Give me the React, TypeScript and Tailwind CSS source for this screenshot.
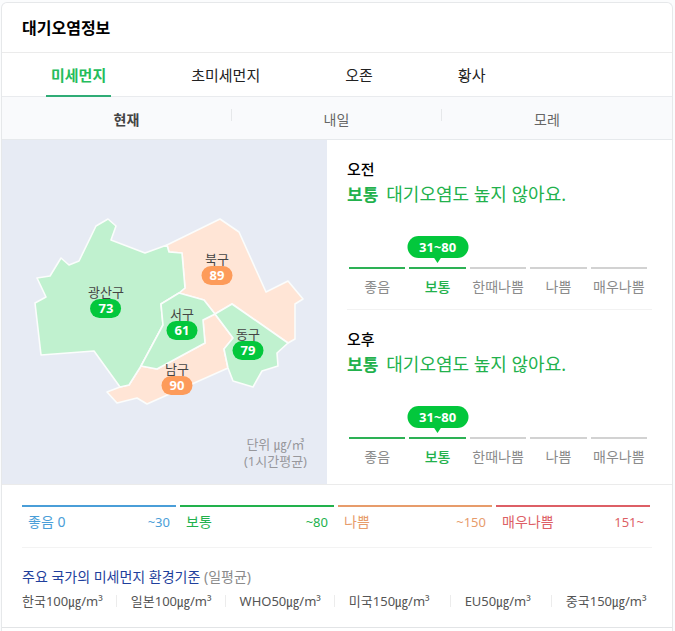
import { useState } from 'react';

const TABS = ['미세먼지', '초미세먼지', '오존', '황사'];
const DAYS = ['현재', '내일', '모레'];

const REGIONS = [
  {
    name: '북구',
    fill: '#ffe5d6',
    points:
      '167,245 220,219 239,232 266,292 288,281 303,299 295,304 295,339 288,343 232,304 215,314 204,300 179,293 185,288 182,253 169,252',
  },
  {
    name: '남구',
    fill: '#ffe5d6',
    points:
      '141,366 157,369 205,343 203,320 215,314 233,338 224,349 228,368 147,404 137,398 117,403 107,392 120,387 129,385',
  },
  {
    name: '광산구',
    fill: '#c0f1cf',
    points:
      '108,219 116,226 111,240 145,253 167,245 169,252 182,253 185,288 179,293 161,304 163,325 141,366 129,385 120,387 94,351 41,355 35,303 46,297 37,278 50,276 61,258 69,265 79,261 96,226',
  },
  {
    name: '서구',
    fill: '#c0f1cf',
    points: '179,293 204,300 215,314 203,320 205,343 157,369 141,366 163,325 161,304',
  },
  {
    name: '동구',
    fill: '#c0f1cf',
    points:
      '215,314 232,304 288,343 277,353 278,366 262,371 253,387 233,381 228,368 224,349 233,338',
  },
];

const PINS = [
  { name: '광산구', value: 73, x: 104, y: 178, color: 'bg-[#03c73c]' },
  { name: '북구', value: 89, x: 215, y: 145, color: 'bg-[#fd9b5a]' },
  { name: '서구', value: 61, x: 180, y: 200, color: 'bg-[#03c73c]' },
  { name: '동구', value: 79, x: 246, y: 220, color: 'bg-[#03c73c]' },
  { name: '남구', value: 90, x: 175, y: 255, color: 'bg-[#fd9b5a]' },
];

const LEVELS = ['좋음', '보통', '한때나쁨', '나쁨', '매우나쁨'];

const LEGEND = [
  { name: '좋음 0', limit: '~30', style: 'border-[#4a9ed8] text-[#4a9ed8]' },
  { name: '보통', limit: '~80', style: 'border-[#22b14c] text-[#22b14c]' },
  { name: '나쁨', limit: '~150', style: 'border-[#e79c6b] text-[#e79c6b]' },
  { name: '매우나쁨', limit: '151~', style: 'border-[#dd5f66] text-[#dd5f66]' },
];

const STANDARDS = ['한국100㎍/m³', '일본100㎍/m³', 'WHO50㎍/m³', '미국150㎍/m³', 'EU50㎍/m³', '중국150㎍/m³'];

function DistrictMap() {
  return (
    <div className="relative mx-auto h-[344px] w-[325px]">
      <svg viewBox="2 140 325 344" className="block h-full w-full" aria-hidden="true">
        {REGIONS.map((r) => (
          <polygon
            key={r.name}
            points={r.points}
            fill={r.fill}
            stroke="#fbfdfc"
            strokeWidth="1.6"
            strokeLinejoin="round"
          />
        ))}
      </svg>
      {PINS.map((p) => (
        <div
          key={p.name}
          className="absolute flex -translate-x-1/2 -translate-y-full flex-col items-center"
          style={{ left: p.x, top: p.y }}
        >
          <span className="h-[13px] text-[13px] leading-[13px] whitespace-nowrap text-[#444]">{p.name}</span>
          <span
            className={`h-[19px] w-[31px] rounded-full text-center text-[13px] leading-[19px] font-bold text-white ${p.color}`}
          >
            {p.value}
          </span>
        </div>
      ))}
      <p className="absolute right-5 bottom-[14px] text-center text-[13px] leading-[17px] text-[#98989c]">
        단위 ㎍/㎥
        <br />
        (1시간평균)
      </p>
    </div>
  );
}

function Forecast({ title }: { title: string }) {
  return (
    <section className="pt-[19px]">
      <h3 className="text-[15px] leading-5 font-medium text-black">{title}</h3>
      <p className="mt-[3px] text-lg leading-6 text-[#22b14c]">
        <strong className="mr-2 text-[17px] font-bold">보통</strong>
        대기오염도 높지 않아요.
      </p>
      <ol className="mr-[5px] ml-[2px] mt-[60px] flex gap-1">
        {LEVELS.map((level, i) => (
          <li
            key={level}
            className={`relative flex flex-1 basis-0 justify-center border-t-2 pt-2 text-sm leading-5 whitespace-nowrap ${
              i < 2 ? 'border-[#2db155]' : 'border-[#d2d2d2]'
            } ${i === 1 ? 'font-medium text-[#22b14c]' : 'text-[#8b8b8b]'}`}
          >
            {level}
            {i === 1 && (
              <span className="absolute bottom-full left-1/2 mb-[11px] h-[22px] w-[61px] -translate-x-1/2 rounded-full bg-[#03c73c] text-center text-[13px] leading-[22px] font-bold text-white">
                31~80
                <span className="absolute top-full left-1/2 -mt-px -translate-x-1/2 border-x-4 border-t-[6px] border-x-transparent border-t-[#03c73c]" />
              </span>
            )}
          </li>
        ))}
      </ol>
    </section>
  );
}

export default function App() {
  const [tab, setTab] = useState(0);
  const [day, setDay] = useState(0);

  return (
    <div className="min-h-screen bg-[#fbfcfd] px-px pt-[2px] pr-[2px] font-['Noto_Sans','Noto_Sans_CJK_KR',sans-serif]">
      <main className="min-h-[629px] rounded-t-md border border-b-0 border-[#e6e8ea] bg-white">
        <h2 className="border-b border-[#ebebeb] px-5 pt-[14px] pb-3 text-base leading-[23px] font-bold text-black">
          대기오염정보
        </h2>

        <nav className="flex gap-[75px] border-b border-[#e9ebee] px-11" aria-label="오염 물질">
          {TABS.map((name, i) => (
            <button
              key={name}
              type="button"
              onClick={() => setTab(i)}
              className={`-mb-px border-b-2 px-[5px] pt-[11px] pb-[9px] text-[15px] leading-[22px] whitespace-nowrap ${
                i === tab ? 'border-[#2fac76] font-bold text-[#25bd5c]' : 'border-transparent text-[#222]'
              }`}
            >
              {name}
            </button>
          ))}
        </nav>

        <nav className="flex border-b border-[#e6e9ec] bg-[#f9fafc] px-5" aria-label="날짜">
          {DAYS.map((name, i) => (
            <div key={name} className="flex flex-1 basis-0 items-start">
              <button
                type="button"
                onClick={() => setDay(i)}
                className={`flex-1 pt-[13px] pb-[9px] text-sm leading-5 ${
                  i === day ? 'font-bold text-[#444]' : 'text-[#666]'
                }`}
              >
                {name}
              </button>
              {i < 2 && <span className="mt-3 h-3 w-px bg-[#e6e8ea]" />}
            </div>
          ))}
        </nav>

        <div className="flex border-b border-[#ebebeb]">
          <div className="flex-[325] basis-0 bg-[#e7ebf4]">
            <DistrictMap />
          </div>
          <div className="flex-[345] basis-0 px-5">
            <div className="border-b border-[#f2f2f2] pb-3">
              <Forecast title="오전" />
            </div>
            <Forecast title="오후" />
          </div>
        </div>

        <div className="px-5 pt-5">
          <ul className="flex gap-1 border-b border-[#f3f3f3] pr-[2px] pb-[15px]">
            {LEGEND.map((item) => (
              <li
                key={item.name}
                className={`flex flex-1 basis-0 justify-between border-t-2 px-[6px] pt-[5px] text-sm leading-5 ${item.style}`}
              >
                <span>{item.name}</span>
                <span className="text-[13px]">{item.limit}</span>
              </li>
            ))}
          </ul>

          <h3 className="pt-[19px] text-sm leading-5 text-[#1f3f9c]">
            주요 국가의 미세먼지 환경기준 <span className="text-[#8b8b8b]">(일평균)</span>
          </h3>
          <ul className="flex pt-1 pb-4 text-[13px] leading-5 whitespace-nowrap text-[#555]">
            {STANDARDS.map((text, i) => (
              <li key={text} className="flex items-center">
                {i > 0 && (
                  <span className={`mr-[14px] h-3 w-px bg-[#ececec] ${i > 3 ? 'ml-5' : 'ml-[13px]'}`} />
                )}
                {text}
              </li>
            ))}
          </ul>
        </div>
        <div className="border-t border-[#e2e4e6]" />
      </main>
    </div>
  );
}
